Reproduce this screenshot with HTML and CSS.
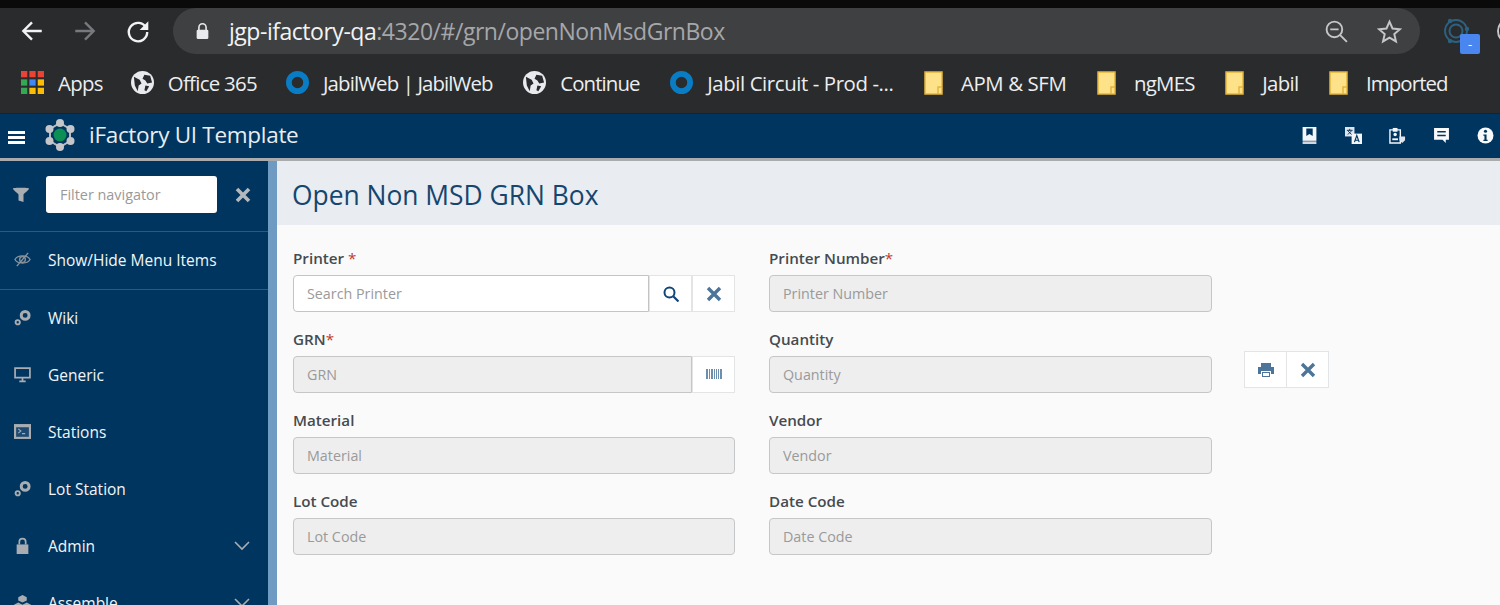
FILE: index.html
```html
<!DOCTYPE html>
<html lang="en">
  <head>
    <meta charset="UTF-8" />
    <title>Open Non MSD GRN Box</title>
    <link rel="stylesheet" href="styles.css">
  </head>
  <body>
    <div class="toolbar">
      <svg class="nav-icon" viewBox="0 0 24 24"><path d="M21 12H4M12 4l-8 8 8 8" fill="none" stroke="#f1f3f4" stroke-width="2.2"/></svg>
      <svg class="nav-icon" viewBox="0 0 24 24"><path d="M3 12h17M12 4l8 8-8 8" fill="none" stroke="#77797c" stroke-width="2.2"/></svg>
      <svg class="nav-icon" viewBox="0 0 24 24"><path d="M19.5 9A8.5 8.5 0 1 0 20.5 13" fill="none" stroke="#f1f3f4" stroke-width="2.2"/><path d="M21.5 3v8h-8z" fill="#f1f3f4"/></svg>
      <div class="omnibox">
        <svg class="lock" viewBox="0 0 16 20"><path d="M4 9V6a4 4 0 0 1 8 0v3" fill="none" stroke="#e8eaed" stroke-width="1.8"/><rect x="1.5" y="8.5" width="13" height="10.5" rx="1.5" fill="#e8eaed"/></svg>
        <div class="url"><span class="host">jgp-ifactory-qa</span>:4320/#/grn/openNonMsdGrnBox</div>
        <svg class="omni-icon" viewBox="0 0 24 24"><circle cx="10" cy="10" r="7.5" fill="none" stroke="#c4c6c9" stroke-width="1.8"/><path d="M6 10h8M15.5 15.5l6.5 6.5" stroke="#c4c6c9" stroke-width="1.8"/></svg>
        <svg class="omni-icon" viewBox="0 0 24 24"><path d="M12 2.5l2.9 6.6 7.1.7-5.4 4.7 1.6 7-6.2-3.7-6.2 3.7 1.6-7L2 9.8l7.1-.7z" fill="none" stroke="#c4c6c9" stroke-width="1.9"/></svg>
      </div>
      <div class="extension">
        <svg viewBox="0 0 30 30"><circle cx="14" cy="15" r="11" fill="none" stroke="#2c6280" stroke-width="1.8"/><circle cx="14" cy="15" r="6.5" fill="none" stroke="#2c6280" stroke-width="2"/><circle cx="8" cy="5" r="2.2" fill="#2c6280"/><circle cx="8" cy="25" r="2.2" fill="#2c6280"/><circle cx="25" cy="13" r="2.2" fill="#2c6280"/></svg>
        <span class="ext-badge">-</span>
      </div>
      <div class="avatar"></div>
    </div>

    <div class="bookmarks">
      <div class="bookmark">
        <svg class="bm-icon" viewBox="0 0 22 22"><path d="M0 0h6v6H0z" fill="#ea4335"/><path d="M8 0h6v6H8zM16 0h6v6h-6z" fill="#ea4335"/><path d="M0 8h6v6H0z" fill="#34a853"/><path d="M8 8h6v6H8z" fill="#4285f4"/><path d="M16 8h6v6h-6z" fill="#fbbc05"/><path d="M0 16h6v6H0z" fill="#34a853"/><path d="M8 16h6v6H8zM16 16h6v6h-6z" fill="#fbbc05"/></svg>
        Apps
      </div>
      <div class="bookmark">
        <svg class="bm-icon" viewBox="0 0 24 24"><circle cx="12" cy="12" r="12" fill="#e8eaed"/><path d="M3 6l6 3 2 4-3 2-1 6-3-6zM14 4l6 1 2 7-5 1-2-3-3-2zM15 15l4 1-3 5-2-1z" fill="#292a2d"/></svg>
        Office 365
      </div>
      <div class="bookmark tight">
        <svg class="bm-icon" viewBox="0 0 24 24"><circle cx="12" cy="12" r="9" fill="none" stroke="#0a7cc4" stroke-width="6"/></svg>
        JabilWeb | JabilWeb
      </div>
      <div class="bookmark tight">
        <svg class="bm-icon" viewBox="0 0 24 24"><circle cx="12" cy="12" r="12" fill="#e8eaed"/><path d="M3 6l6 3 2 4-3 2-1 6-3-6zM14 4l6 1 2 7-5 1-2-3-3-2zM15 15l4 1-3 5-2-1z" fill="#292a2d"/></svg>
        Continue
      </div>
      <div class="bookmark loose">
        <svg class="bm-icon" viewBox="0 0 24 24"><circle cx="12" cy="12" r="9" fill="none" stroke="#0a7cc4" stroke-width="6"/></svg>
        Jabil Circuit - Prod -...
      </div>
      <div class="bookmark loose">
        <svg class="bm-folder" viewBox="0 0 20 24"><path d="M1 1h17v22H1z" fill="#fde28a" stroke="#e3b53c" stroke-width="1.5"/><path d="M18 16h-4v7" fill="none" stroke="#e3b53c" stroke-width="1.5"/></svg>
        APM &amp; SFM
      </div>
      <div class="bookmark">
        <svg class="bm-folder" viewBox="0 0 20 24"><path d="M1 1h17v22H1z" fill="#fde28a" stroke="#e3b53c" stroke-width="1.5"/><path d="M18 16h-4v7" fill="none" stroke="#e3b53c" stroke-width="1.5"/></svg>
        ngMES
      </div>
      <div class="bookmark">
        <svg class="bm-folder" viewBox="0 0 20 24"><path d="M1 1h17v22H1z" fill="#fde28a" stroke="#e3b53c" stroke-width="1.5"/><path d="M18 16h-4v7" fill="none" stroke="#e3b53c" stroke-width="1.5"/></svg>
        Jabil
      </div>
      <div class="bookmark tight">
        <svg class="bm-folder" viewBox="0 0 20 24"><path d="M1 1h17v22H1z" fill="#fde28a" stroke="#e3b53c" stroke-width="1.5"/><path d="M18 16h-4v7" fill="none" stroke="#e3b53c" stroke-width="1.5"/></svg>
        Imported
      </div>
    </div>

    <header class="navbar">
      <div class="hamburger"><span></span><span></span><span></span></div>
      <svg class="logo" viewBox="0 0 34 34">
        <path d="M17 5L27 11V23L17 29L7 23V11Z" fill="none" stroke="#b9bdc2" stroke-width="2"/>
        <circle cx="17" cy="5" r="4" fill="#c4c6c9"/><circle cx="27.5" cy="11" r="4" fill="#c4c6c9"/><circle cx="27.5" cy="23" r="4" fill="#c4c6c9"/>
        <circle cx="17" cy="29" r="4" fill="#c4c6c9"/><circle cx="6.5" cy="23" r="4" fill="#c4c6c9"/><circle cx="6.5" cy="11" r="4" fill="#c4c6c9"/>
        <circle cx="17" cy="17" r="6.5" fill="#0c8f55"/>
      </svg>
      <div class="brand">iFactory UI Template</div>
      <div class="nav-actions">
        <svg viewBox="0 0 16 16"><path d="M1.5 0h13v13h-13z" fill="#f4f6f8"/><path d="M5 1.5h6v7L8 6.5 5 8.5z" fill="#00355f"/><path d="M1.5 13.5h13V16h-13z" fill="#cfd6dd"/></svg>
        <svg viewBox="0 0 18 18"><path d="M0 0h10v10H0z" fill="#dfe5ec"/><path d="M7 7h11v11H7z" fill="#f4f6f8"/><path d="M2 3.5h6M5 2v2M3 8l4-4M3 4l4 4" stroke="#00355f" stroke-width="1"/><path d="M10 16l2.5-7 2.5 7M11 14h3" fill="none" stroke="#00355f" stroke-width="1.2"/></svg>
        <svg viewBox="0 0 18 18"><path d="M1 3h11v14H1z" fill="none" stroke="#f4f6f8" stroke-width="1.5"/><path d="M4 1h5v4H4z" fill="#f4f6f8"/><circle cx="6.5" cy="8" r="1.8" fill="#f4f6f8"/><path d="M3.5 14v-2h6v2z" fill="#f4f6f8"/><path d="M11 10h6v4l-3 3-3-3z" fill="#dfe5ec"/></svg>
        <svg viewBox="0 0 16 16"><path d="M1 1h14v11h-3v3l-3-3H1z" fill="#f8f9fa"/><path d="M4 4.5h8M4 8h8" stroke="#00355f" stroke-width="1.5"/></svg>
        <svg viewBox="0 0 16 16"><circle cx="8" cy="8" r="7.5" fill="#f8f9fa"/><circle cx="8" cy="4" r="1.5" fill="#00355f"/><path d="M6 7h3v5h1v1.2H6V12h1V8.2H6z" fill="#00355f"/></svg>
      </div>
    </header>

    <div class="layout">
      <aside class="sidebar">
        <div class="filter-row">
          <svg class="filter-icon" viewBox="0 0 16 16"><path d="M0 1.500C0 .5 16 .5 16 1.500c0 1.500-5 5-5.500 6V15l-5-1.500V7.500C5 6.500 0 3 0 1.500z" fill="#a9adb2"/></svg>
          <div class="filter-input">Filter navigator</div>
          <svg class="filter-close" viewBox="0 0 16 16"><path d="M2 2l12 12M14 2L2 14" stroke="#b5b8bc" stroke-width="3.6"/></svg>
        </div>
        <div class="menu-item toggle">
          <svg viewBox="0 0 18 16"><path d="M1 8c3-5 13-5 16 0-3 5-13 5-16 0z" fill="none" stroke="#8d949b" stroke-width="1.4"/><circle cx="9" cy="8" r="3" fill="none" stroke="#8d949b" stroke-width="1.4"/><path d="M3 15L15 1" stroke="#8d949b" stroke-width="1.4"/></svg>
          Show/Hide Menu Items
        </div>
        <div class="menu-item">
          <svg viewBox="0 0 16 16"><circle cx="10.5" cy="6" r="3.7" fill="none" stroke="#a9adb2" stroke-width="2.8"/><circle cx="3.5" cy="12.500" r="2" fill="none" stroke="#a9adb2" stroke-width="1.8"/></svg>
          Wiki
        </div>
        <div class="menu-item">
          <svg viewBox="0 0 16 16"><path d="M1 2h14v9H1z" fill="none" stroke="#a9adb2" stroke-width="1.6"/><path d="M5 14.500h6M8 11v3" stroke="#a9adb2" stroke-width="1.6"/></svg>
          Generic
        </div>
        <div class="menu-item">
          <svg viewBox="0 0 16 14"><path d="M0 0h16v14H0z" fill="#a9adb2"/><path d="M2 3h12v9H2z" fill="#1d4a72"/><path d="M4 4.500l2.500 2L4 8.500M7.500 9h3" fill="none" stroke="#a9adb2" stroke-width="1"/></svg>
          Stations
        </div>
        <div class="menu-item">
          <svg viewBox="0 0 16 16"><circle cx="10.5" cy="6" r="3.7" fill="none" stroke="#a9adb2" stroke-width="2.8"/><circle cx="3.5" cy="12.500" r="2" fill="none" stroke="#a9adb2" stroke-width="1.8"/></svg>
          Lot Station
        </div>
        <div class="menu-item">
          <svg viewBox="0 0 16 16"><path d="M5 7V4.500a3 3 0 0 1 6 0V7" fill="none" stroke="#a9adb2" stroke-width="1.6"/><path d="M2.500 7h11v9h-11z" fill="#a9adb2"/></svg>
          Admin
          <svg class="chevron" viewBox="0 0 16 10"><path d="M1 1l7 7 7-7" fill="none" stroke="#a9adb2" stroke-width="1.6"/></svg>
        </div>
        <div class="menu-item">
          <svg viewBox="0 0 16 16"><path d="M8 1l4 2v3L8 8 4 6V3zM4 8l4 2v3l-4 2-4-2v-3zM12 8l4 2v3l-4 2-4-2v-3z" fill="#a9adb2"/></svg>
          Assemble
          <svg class="chevron" viewBox="0 0 16 10"><path d="M1 1l7 7 7-7" fill="none" stroke="#a9adb2" stroke-width="1.6"/></svg>
        </div>
      </aside>
      <div class="rail"></div>

      <main class="content">
        <div class="page-title">Open Non MSD GRN Box</div>
        <div class="form">
          <div class="field">
            <label>Printer <em>*</em></label>
            <div class="input-group">
              <div class="input">Search Printer</div>
              <div class="addon"><svg viewBox="0 0 16 16"><circle cx="6.500" cy="6.500" r="5" fill="none" stroke="#10457a" stroke-width="2"/><path d="M10.500 10.500l5 5" stroke="#10457a" stroke-width="2.200"/></svg></div>
              <div class="addon"><svg viewBox="0 0 16 16"><path d="M2 2l12 12M14 2L2 14" stroke="#4d7599" stroke-width="3.400"/></svg></div>
            </div>
          </div>
          <div class="field">
            <label>Printer Number<em>*</em></label>
            <div class="input disabled">Printer Number</div>
          </div>
          <div class="spacer"></div>

          <div class="field">
            <label>GRN<em>*</em></label>
            <div class="input-group">
              <div class="input disabled">GRN</div>
              <div class="addon"><svg class="barcode" viewBox="0 0 16 12"><path d="M0 0h2v10H0zM3 0h1v10H3zM5 0h2v10H5zM8 0h1v10H8zM10 0h1v10h-1zM12 0h1v10h-1zM14 0h2v10h-2z" fill="#6c8fb0"/></svg></div>
            </div>
          </div>
          <div class="field">
            <label>Quantity</label>
            <div class="input disabled">Quantity</div>
          </div>
          <div class="actions">
            <div class="addon"><svg viewBox="0 0 16 14"><path d="M3 0h10v4H3zM0 4h16v7H13V8H3v3H0z" fill="#4d7599"/><path d="M4 9h8v5H4z" fill="#4d7599"/><path d="M5 10h6v3H5z" fill="#fff"/></svg></div>
            <div class="addon"><svg viewBox="0 0 16 16"><path d="M2 2l12 12M14 2L2 14" stroke="#4d7599" stroke-width="3.400"/></svg></div>
          </div>

          <div class="field">
            <label>Material</label>
            <div class="input disabled">Material</div>
          </div>
          <div class="field">
            <label>Vendor</label>
            <div class="input disabled">Vendor</div>
          </div>
          <div class="spacer"></div>

          <div class="field">
            <label>Lot Code</label>
            <div class="input disabled">Lot Code</div>
          </div>
          <div class="field">
            <label>Date Code</label>
            <div class="input disabled">Date Code</div>
          </div>
          <div class="spacer"></div>
        </div>
      </main>
    </div>
  </body>
</html>
```

FILE: styles.css
```css
html,
body {
  margin: 0;
  height: 605px;
  overflow: hidden;
}
body {
  background: #fafafa;
  font-family: 'Open Sans', sans-serif;
  display: flex;
  flex-direction: column;
}
svg {
  display: block;
  flex: none;
}
.toolbar {
  height: 46px;
  padding: 0 0 6px 19px;
  border-top: 8px solid #0a0a0a;
  background: #2a2b2d;
  display: flex;
  align-items: center;
  flex: none;
}
.nav-icon {
  width: 26px;
  height: 26px;
  margin-right: 27px;
}
.nav-icon:nth-child(3) {
  margin-right: 22px;
}
.omnibox {
  width: 1247px;
  height: 46px;
  border-radius: 23px;
  background: #3f4042;
  display: flex;
  align-items: center;
  padding-left: 22px;
  box-sizing: border-box;
  flex: none;
}
.lock {
  width: 15px;
  height: 18px;
}
.url {
  margin-left: 19px;
  font-size: 23px;
  color: #a5a7aa;
  flex: 1;
  letter-spacing: -0.47px;
}
.host {
  color: #f1f3f4;
}
.omni-icon {
  width: 25px;
  height: 25px;
  margin-right: 28px;
}
.omni-icon:last-child {
  margin-right: 18px;
}
.extension {
  position: relative;
  width: 30px;
  height: 30px;
  margin-left: 22px;
  flex: none;
}
.ext-badge {
  position: absolute;
  left: 18px;
  top: 18px;
  width: 20px;
  height: 20px;
  border-radius: 2px;
  background: #4a86f0;
  color: #fff;
  font-size: 13px;
  line-height: 20px;
  text-align: center;
}
.avatar {
  width: 20px;
  height: 22px;
  margin-left: 25px;
  border: 2px solid #c4c6c9;
  border-radius: 50%;
  flex: none;
}
.bookmarks {
  height: 54px;
  background: #2a2b2d;
  border-bottom: 1px solid #16222c;
  display: flex;
  align-items: center;
  padding: 0 0 8px 21px;
  box-sizing: border-box;
  color: #eceef0;
  font-size: 20.4px;
  letter-spacing: -0.7px;
  white-space: nowrap;
  flex: none;
}
.bookmark {
  display: flex;
  align-items: center;
  margin-right: 30.5px;
}
.bookmark:first-child {
  margin-right: 28px;
}
.bookmark:nth-child(2) {
  margin-right: 29px;
}
.bookmark.tight {
  letter-spacing: -0.88px;
}
.bookmark.loose {
  letter-spacing: -0.4px;
}
.bm-icon {
  width: 23px;
  height: 23px;
  margin-right: 14px;
}
.bm-folder {
  width: 20px;
  height: 24px;
  margin-right: 17px;
}
.navbar {
  padding: 0 0 2px 8px;
  height: 42px;
  background: #00355f;
  border-bottom: 3px solid #a9abad;
  display: flex;
  align-items: center;
  flex: none;
}
.hamburger {
  width: 17px;
  display: flex;
  flex-direction: column;
  gap: 2px;
  margin-top: 5px;
}
.hamburger span {
  height: 3px;
  background: #fff;
}
.logo {
  width: 34px;
  height: 36px;
  margin-left: 18px;
}
.brand {
  margin: 0 0 2px 12px;
  color: #e9edf1;
  font-size: 22.5px;
  letter-spacing: -0.3px;
}
.nav-actions {
  margin-left: auto;
  display: flex;
  align-items: center;
  gap: 27px;
  padding-right: 6px;
}
.nav-actions svg {
  width: 17px;
  height: 17px;
}
.layout {
  flex: 1;
  display: flex;
  min-height: 0;
}
.sidebar {
  width: 268px;
  background: #00355f;
  flex: none;
  overflow: hidden;
}
.rail {
  width: 9px;
  background: #6f9bc3;
  flex: none;
}
.filter-row {
  height: 67px;
  padding: 0 0 3px 13px;
  border-bottom: 1px solid #2b5a80;
  display: flex;
  align-items: center;
}
.filter-icon {
  width: 16px;
  height: 16px;
}
.filter-input {
  width: 171px;
  height: 37px;
  margin-left: 17px;
  background: #fff;
  border-radius: 3px;
  box-sizing: border-box;
  padding-left: 14px;
  line-height: 37px;
  font-size: 14.4px;
  color: #999;
}
.filter-close {
  width: 16px;
  height: 16px;
  margin-left: 18px;
}
.menu-item {
  height: 57px;
  display: flex;
  align-items: center;
  padding: 0 0 2px 14px;
  color: #f2f5f8;
  font-size: 15.5px;
  box-sizing: border-box;
  position: relative;
}
.menu-item svg:first-child {
  width: 17px;
  height: 17px;
  margin-right: 17px;
}
.menu-item.toggle {
  height: 58px;
  border-bottom: 1px solid #2b5a80;
}
.chevron {
  position: absolute;
  right: 18px;
  top: 23px;
  width: 16px;
  height: 10px;
}
.content {
  flex: 1;
  min-width: 0;
}
.page-title {
  height: 64px;
  background: #e9ecf1;
  padding-left: 15px;
  line-height: 68px;
  color: #14466f;
  font-size: 26.4px;
}
.form {
  display: grid;
  grid-template-columns: 442px 443px 85px;
  column-gap: 34px;
  padding: 23px 0 0 16px;
}
.field {
  height: 81px;
}
.field label {
  display: block;
  height: 27px;
  line-height: 21px;
  font-size: 15.2px;
  font-weight: 600;
  color: #454b50;
}
.field em {
  color: #c0392b;
  font-style: normal;
  font-weight: 500;
}
.input {
  height: 37px;
  box-sizing: border-box;
  border: 1px solid #c2c4c6;
  border-radius: 4px;
  background: #fff;
  padding-left: 13px;
  line-height: 35px;
  font-size: 14.3px;
  color: #9a9a9a;
}
.input.disabled {
  background: #eeeeee;
  border-color: #c4c6c8;
}
.input-group {
  display: flex;
}
.input-group .input {
  flex: 1;
  border-radius: 4px 0 0 4px;
}
.addon {
  width: 43px;
  height: 37px;
  box-sizing: border-box;
  background: #fff;
  border: 1px solid #e2e4e6;
  display: flex;
  align-items: center;
  justify-content: center;
}
.addon svg {
  width: 16px;
  height: 16px;
}
.addon svg.barcode {
  height: 12px;
}
.actions {
  display: flex;
  padding-top: 22px;
  margin-left: -2px;
  align-self: start;
}
.actions .addon + .addon {
  margin-left: -1px;
}
.spacer {
  height: 81px;
}
```
